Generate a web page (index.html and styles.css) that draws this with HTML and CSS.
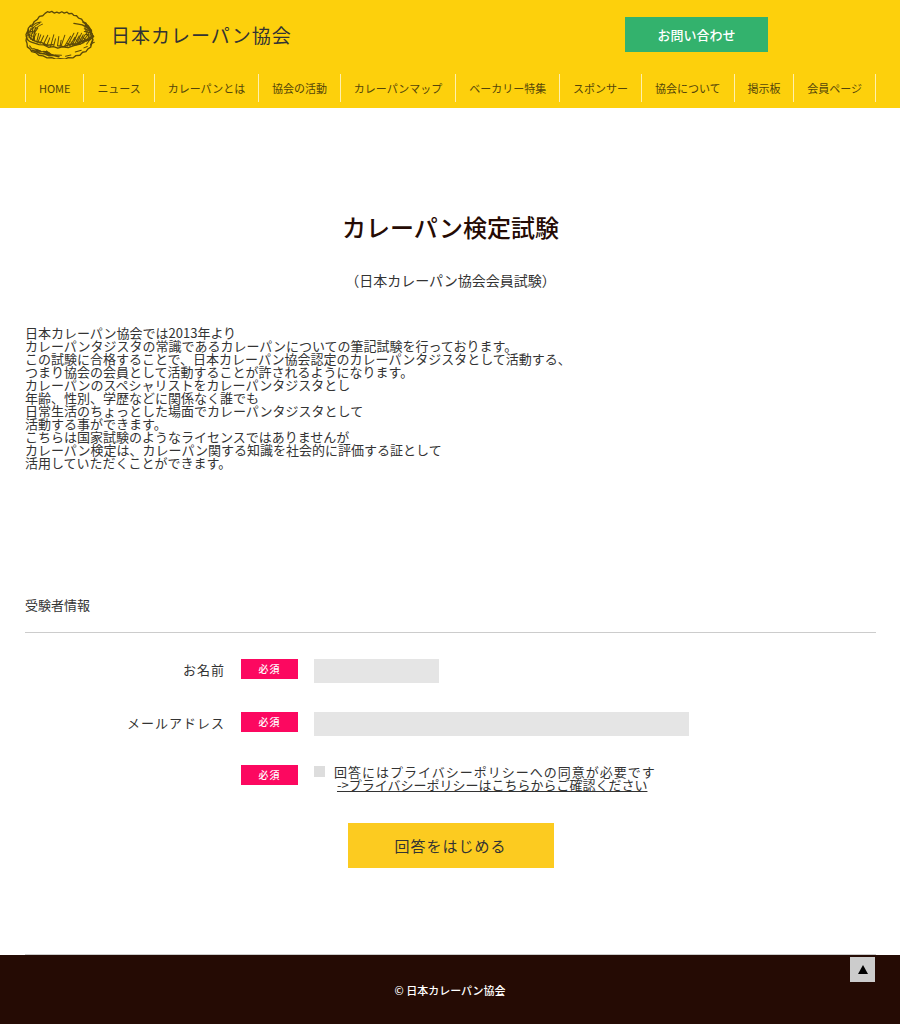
FILE: index.html
```
<!DOCTYPE html>
<html lang="ja">
<head>
	<meta charset="UTF-8">
	<meta name="viewport" content="width=device-width, initial-scale=1">
	<title>カレーパン検定試験</title>
	<link rel="stylesheet" href="styles.css">
</head>
<body>
	<header class="header">
		<div class="header-top">
			<a class="logo" href="#">
				<svg class="logo-mark" viewBox="28 30 212 146" fill="none" stroke="#5c4908" stroke-linecap="round" stroke-linejoin="round" aria-hidden="true">
					<!-- 輪郭 -->
					<path stroke-width="4" d="M50 75l6-11 9-6 6-9 10-2 7-7 7-5 6 2 7-3 7 5 8-3 7 3 8-4 7 4 8-3 6 5 9-1 6 6 8 1 6 7 9 3 5 8 8 4 4 8 7 7 2 10 6 8-1 9 3 8-4 12-3 10-8 5-6 8-10 2-8 9-12 1-9 7-14-1-10 5-14-2-12 2-13-5-14 1-12-6-13-2-9-8-12-3-5-8-8-6-1-11-3-8 2-10-2-8 5-10 2-9 8-9z"/>
					<!-- 縁 -->
					<path stroke-width="4" d="M32 108q2 14 15 18t23 7l14 1 14 7 15-2 13 5 13-4 18 2 17-6 19-4 15-9 14-4 11-10M36 97q4 16 16 23t23 6l19 9 18-2M128 137l16 2 19-7 22-2 15-8 17-4 13-13"/>
					<!-- 左の影 -->
					<path stroke-width="3" d="M76 66q-17 1-27 13M72 69q-22 12-33 29M80 72q-20 8-30 28M39 87l-3 20M46 84l-6 29M52 83l-7 34M59 82l-8 39M66 84q-16 19-11 38M61 100q-7 10-5 22M43 78l11 5M37 90l14 6M36 101l14 7M69 100l-6 25M75 104l-9 24M84 107l-11 23M96 105l-13 28M102 113l-9 23M114 104l-10 35M119 116l-5 20M129 109l-4 28M136 120l-3 17M147 105l-11 32"/>
					<!-- 右の影 -->
					<path stroke-width="4" d="M174 70l13 2 12 2 11 6 12 9M201 66l16 11 10 16M208 74l16 20 8 15"/>
					<path stroke-width="3" d="M207 81l5 19M213 84l5 21M219 84l5 21M225 88l4 19M205 86l13 6M205 94l21 5M209 102l23 5M164 108l-18 31M174 99l-20 39M177 111l-15 26M186 97l-17 39M190 107l-15 28M197 99l-16 35M202 104l-16 28M208 103l-17 28M213 107l-15 22M220 109l-15 16M228 107l-16 15M180 119l13 13M190 114l12 14M200 110l12 13M153 128l10 9M165 125l10 9M213 103l11 14"/>
					<!-- 底の焦げ目 -->
					<path stroke-width="5" d="M49 150l13 4 10 5 16 2 11 5 15-1M63 149l12 5M84 154l17 5M93 161l16 3 20 5"/>
					<path stroke-width="3" d="M42 137l6 8 15 3 12 5 13 1 15 6M55 145l15 13M92 152l13 10M118 164l19 1M149 168l16-4M178 155l18-5M204 143l10-4M220 121l-8 11M230 118l-7 17M227 130l8-4"/>
				</svg>
				<span>日本カレーパン協会</span>
			</a>
			<a class="contact" href="#">お問い合わせ</a>
		</div>
		<nav>
			<ul class="nav">
				<li><a href="#">HOME</a></li>
				<li><a href="#">ニュース</a></li>
				<li><a href="#">カレーパンとは</a></li>
				<li><a href="#">協会の活動</a></li>
				<li><a href="#">カレーパンマップ</a></li>
				<li><a href="#">ベーカリー特集</a></li>
				<li><a href="#">スポンサー</a></li>
				<li><a href="#">協会について</a></li>
				<li><a href="#">掲示板</a></li>
				<li><a href="#">会員ページ</a></li>
			</ul>
		</nav>
	</header>

	<main class="main">
		<h1 class="title">カレーパン検定試験</h1>
		<p class="subtitle">（日本カレーパン協会会員試験）</p>
		<p class="lead">
			日本カレーパン協会では2013年より<br>
			カレーパンタジスタの常識であるカレーパンについての筆記試験を行っております。<br>
			この試験に合格することで、日本カレーパン協会認定のカレーパンタジスタとして活動する、<br>
			つまり協会の会員として活動することが許されるようになります。<br>
			カレーパンのスペシャリストをカレーパンタジスタとし<br>
			年齢、性別、学歴などに関係なく誰でも<br>
			日常生活のちょっとした場面でカレーパンタジスタとして<br>
			活動する事ができます。<br>
			こちらは国家試験のようなライセンスではありませんが<br>
			カレーパン検定は、カレーパン関する知識を社会的に評価する証として<br>
			活用していただくことができます。
		</p>

		<form class="form">
			<h2 class="form-title">受験者情報</h2>
			<div class="row">
				<label class="label" for="name">お名前</label>
				<span class="must">必須</span>
				<div class="field"><input class="text short" type="text" id="name"></div>
			</div>
			<div class="row">
				<label class="label" for="mail">メールアドレス</label>
				<span class="must">必須</span>
				<div class="field"><input class="text" type="email" id="mail"></div>
			</div>
			<div class="row">
				<span class="must">必須</span>
				<div class="field">
					<div class="agree">
						<input class="check" type="checkbox" id="agree">
						<label for="agree">回答にはプライバシーポリシーへの同意が必要です</label>
					</div>
					<a class="policy" href="#">-&gt;プライバシーポリシーはこちらからご確認ください</a>
				</div>
			</div>
			<button class="submit" type="submit">回答をはじめる</button>
		</form>
	</main>

	<footer class="footer">
		<small>© 日本カレーパン協会</small>
	</footer>
	<a class="pagetop" href="#" aria-label="ページの先頭へ">
		<svg width="10" height="9" viewBox="0 0 10 9" aria-hidden="true"><path d="M5 0l5 9H0z"/></svg>
	</a>
</body>
</html>
```
FILE: styles.css
```
* {
	margin: 0;
	padding: 0;
	box-sizing: border-box;
}
body {
	display: flex;
	flex-direction: column;
	min-height: 100vh;
	background: #fff;
	color: #333;
	font-family: "Noto Sans CJK JP", sans-serif;
	font-size: 13px;
	line-height: 13px;
}
a {
	color: inherit;
	text-decoration: none;
}
li {
	list-style: none;
}

/* header */
.header {
	padding: 10px 24px 6px 25px;
	background: #fdd00c;
}
.header-top {
	display: flex;
	justify-content: space-between;
	align-items: flex-start;
	margin-bottom: 15px;
}
.logo {
	display: flex;
	align-items: center;
	gap: 15px;
	font-size: 19px;
	line-height: 20px;
	letter-spacing: 1px;
}
.logo-mark {
	display: block;
	width: 71px;
	height: 49px;
}
.contact {
	width: 143px;
	margin-top: 7px;
	margin-right: 12.7%;
	background: #33b26d;
	color: #fff;
	font-weight: 500;
	line-height: 35px;
	text-align: center;
}
.nav {
	display: flex;
	border-left: 1px solid #fff0ad;
	color: #54450a;
	font-size: 11px;
	line-height: 28px;
}
.nav li {
	flex: 1 1 auto;
	border-right: 1px solid #fff0ad;
	text-align: center;
	white-space: nowrap;
}
.nav a {
	display: block;
}

/* main */
.main {
	flex: 1;
	margin: 0 24px 0 25px;
	padding-top: 103px;
	border-bottom: 1px solid #ccc;
}
.title {
	color: #250b04;
	font-size: 24px;
	font-weight: 500;
	line-height: 32px;
	text-align: center;
}
.subtitle {
	margin-top: 29px;
	font-size: 14px;
	line-height: 16px;
	text-align: center;
}
.lead {
	margin-top: 38px;
}

/* form */
.form {
	padding-top: 129px;
	padding-bottom: 86px;
}
.form-title {
	margin-bottom: 26px;
	padding-bottom: 21px;
	border-bottom: 1px solid #ccc;
	font-size: 13px;
	font-weight: 400;
}
.row {
	display: grid;
	grid-template-columns: 23.5% 57px 1fr;
	column-gap: 16px;
	align-items: start;
	margin-bottom: 29px;
}
.label {
	line-height: 22px;
	letter-spacing: 1px;
	text-align: right;
}
.must {
	grid-column: 2;
	background: #fc0860;
	color: #fff;
	font-size: 10px;
	font-weight: 500;
	line-height: 20px;
	letter-spacing: 1px;
	text-align: center;
}
.text {
	display: block;
	width: 100%;
	max-width: 375px;
	height: 24px;
	padding: 0 4px;
	background: #e5e5e5;
	border: none;
	border-radius: 0;
	font: inherit;
}
.short {
	max-width: 125px;
}
.agree {
	display: flex;
	align-items: center;
	gap: 9px;
	letter-spacing: 1px;
}
.check {
	width: 11px;
	height: 11px;
	background: #ddd;
	appearance: none;
}
.check:checked {
	background: #33b26d;
}
.policy {
	display: inline-block;
	margin-left: 23px;
	text-decoration: underline;
}
.submit {
	display: block;
	width: 206px;
	height: 45px;
	margin: 32px auto 0;
	background: #fccb20;
	border: none;
	color: #333;
	font-family: inherit;
	font-size: 15px;
	letter-spacing: 1px;
	cursor: pointer;
}

/* footer */
.footer {
	padding: 28px 0;
	background: #250b04;
	color: #fff;
	text-align: center;
}
.footer small {
	font-size: 11px;
	font-weight: 500;
}
.pagetop {
	position: fixed;
	right: 25px;
	bottom: 42px;
	display: flex;
	align-items: center;
	justify-content: center;
	width: 25px;
	height: 25px;
	background: #ccc;
}
```
